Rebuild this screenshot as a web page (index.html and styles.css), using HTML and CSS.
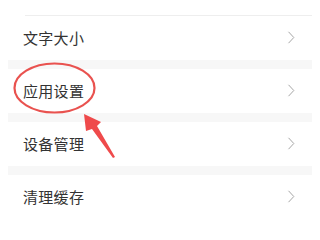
FILE: index.html
```html
<!DOCTYPE html>
<html lang="zh">
<head>
<meta charset="utf-8">
<link rel="stylesheet" href="styles.css">
</head>
<body>
<div class="page">
  <div class="list">
    <div class="row row-top">
      <span class="label">显示设置</span>
      <span class="value">标准字体</span>
    </div>
    <div class="divider"></div>
    <div class="row">
      <span class="label">文字大小</span>
      <svg class="chev" width="8" height="13" viewBox="0 0 8 13"><path d="M1.5 0.8 L6.8 6.5 L1.5 12.2" fill="none" stroke="#a6a6a6" stroke-width="1"/></svg>
    </div>
    <div class="band"></div>
    <div class="row">
      <span class="label">应用设置</span>
      <svg class="chev" width="8" height="13" viewBox="0 0 8 13"><path d="M1.5 0.8 L6.8 6.5 L1.5 12.2" fill="none" stroke="#a6a6a6" stroke-width="1"/></svg>
    </div>
    <div class="band"></div>
    <div class="row">
      <span class="label">设备管理</span>
      <svg class="chev" width="8" height="13" viewBox="0 0 8 13"><path d="M1.5 0.8 L6.8 6.5 L1.5 12.2" fill="none" stroke="#a6a6a6" stroke-width="1"/></svg>
    </div>
    <div class="band"></div>
    <div class="row">
      <span class="label">清理缓存</span>
      <svg class="chev" width="8" height="13" viewBox="0 0 8 13"><path d="M1.5 0.8 L6.8 6.5 L1.5 12.2" fill="none" stroke="#a6a6a6" stroke-width="1"/></svg>
    </div>
  </div>
  <svg class="annot" width="316" height="205" viewBox="0 0 316 205">
    <ellipse cx="54.5" cy="88" rx="40" ry="24.5" fill="none" stroke="#e9524f" stroke-width="2.2"/>
    <polygon points="84,114 101,122 97,126 115,157 113,158 92,129 86,131" fill="#ef4a4b"/>
  </svg>
</div>
</body>
</html>
```
FILE: styles.css
```css
html, body {
  margin: 0;
  padding: 0;
  background: #ffffff;
}
body {
  font-family: "Noto Sans CJK SC", "Noto Sans", sans-serif;
  overflow: hidden;
}
.page {
  position: relative;
  width: 316px;
  height: 205px;
  overflow: hidden;
}
.list {
  display: flex;
  flex-direction: column;
  margin: 0 4px 0 8px;
}
.row {
  height: 44px;
  display: flex;
  align-items: center;
  justify-content: space-between;
  padding: 0 17px 2px 15px;
  box-sizing: border-box;
  color: #333333;
  font-size: 15px;
}
.row-top {
  height: 30px;
  margin-top: -15px;
  padding-bottom: 0;
  align-items: flex-start;
  color: #e6e6e6;
  line-height: 14px;
}
.row-top .value {
  margin-right: 10px;
}
.divider {
  height: 1px;
  background: #eeeeee;
  margin-left: 17px;
}
.band {
  height: 9px;
  background: #f7f7f7;
}
.label {
  letter-spacing: 0.3px;
}
.chev {
  display: block;
}
.annot {
  position: absolute;
  left: 0;
  top: 0;
}
```
